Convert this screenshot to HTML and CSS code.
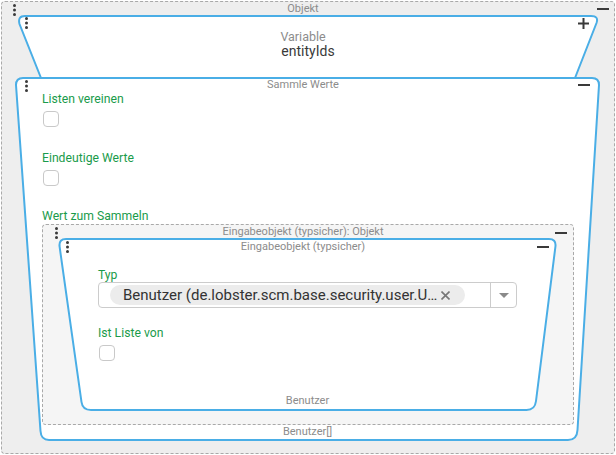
FILE: index.html
```html
<!DOCTYPE html>
<html lang="de">
<head>
<meta charset="utf-8">
<title>Objekt</title>
<link rel="stylesheet" href="styles.css">
</head>
<body>
<div class="obj">
  <div class="obj-head">
    <svg class="dots" width="3" height="12" viewBox="0 0 3 12"><circle cx="1.5" cy="1.5" r="1.5"/><circle cx="1.5" cy="6" r="1.5"/><circle cx="1.5" cy="10.5" r="1.5"/></svg>
    <div class="title obj-title">Objekt</div>
    <span class="minus obj-minus"></span>
  </div>
  <div class="node var">
    <svg class="shape" width="582" height="62" viewBox="0 0 582 62"><path d="M24 63 L2.5 9 Q0.5 1 8 1 L574 1 Q582 1 579.5 8 L558 63" /></svg>
    <div class="var-head">
      <svg class="dots" width="3" height="12" viewBox="0 0 3 12"><circle cx="1.5" cy="1.5" r="1.5"/><circle cx="1.5" cy="6" r="1.5"/><circle cx="1.5" cy="10.5" r="1.5"/></svg>
      <svg class="plus" width="11" height="11" viewBox="0 0 11 11"><path d="M5.5 0 V11 M0 5.5 H11"/></svg>
    </div>
    <div class="var-label">Variable</div>
    <div class="var-name">entityIds</div>
  </div>
  <div class="node sammle">
    <svg class="shape" width="585" height="364" viewBox="0 0 585 364"><path d="M8 1 L577 1 Q584 1 584 8 L562.5 353 Q562 363 553 363 L34 363 Q26 363 25.5 354 L1 8 Q1 1 8 1 Z"/></svg>
    <div class="head sammle-head">
      <svg class="dots" width="3" height="12" viewBox="0 0 3 12"><circle cx="1.5" cy="1.5" r="1.5"/><circle cx="1.5" cy="6" r="1.5"/><circle cx="1.5" cy="10.5" r="1.5"/></svg>
      <div class="title">Sammle Werte</div>
      <span class="minus"></span>
    </div>
    <div class="sammle-body">
      <div class="label">Listen vereinen</div>
      <div class="cb"></div>
      <div class="label gap">Eindeutige Werte</div>
      <div class="cb"></div>
      <div class="label gap3">Wert zum Sammeln</div>
      <div class="typed">
        <div class="head typed-head">
          <svg class="dots" width="3" height="12" viewBox="0 0 3 12"><circle cx="1.5" cy="1.5" r="1.5"/><circle cx="1.5" cy="6" r="1.5"/><circle cx="1.5" cy="10.5" r="1.5"/></svg>
          <div class="title typed-title">Eingabeobjekt (typsicher): Objekt</div>
          <span class="minus"></span>
        </div>
        <div class="node inner">
          <svg class="shape" width="499" height="173" viewBox="0 0 499 173"><path d="M8 1 L491 1 Q498 1 497.5 8 L478 163 Q477 172 468.5 172 L33 172 Q24.5 172 23.5 164 L1.5 8 Q1 1 8 1 Z"/></svg>
          <div class="head inner-head">
            <svg class="dots" width="3" height="12" viewBox="0 0 3 12"><circle cx="1.5" cy="1.5" r="1.5"/><circle cx="1.5" cy="6" r="1.5"/><circle cx="1.5" cy="10.5" r="1.5"/></svg>
            <div class="title">Eingabeobjekt (typsicher)</div>
            <span class="minus"></span>
          </div>
          <div class="inner-body">
            <div class="label typ">Typ</div>
            <div class="select">
              <div class="chip">
                <span class="chip-text">Benutzer (de.lobster.scm.base.security.user.U…</span>
                <svg class="chip-x" width="9" height="9" viewBox="0 0 9 9"><path d="M0.5 0.5 L8.5 8.5 M8.5 0.5 L0.5 8.5"/></svg>
              </div>
              <div class="select-fill"></div>
              <div class="select-arrow"><svg width="10" height="5" viewBox="0 0 10 5"><path d="M0 0 H10 L5 5 Z"/></svg></div>
            </div>
            <div class="label liste">Ist Liste von</div>
            <div class="cb cb-liste"></div>
          </div>
          <div class="foot inner-foot">Benutzer</div>
        </div>
      </div>
    </div>
    <div class="foot sammle-foot">Benutzer[]</div>
  </div>
</div>
</body>
</html>
```

FILE: styles.css
```css
html, body {
  margin: 0;
  padding: 0;
  background: #ffffff;
}
body {
  font-family: Roboto, "Liberation Sans", sans-serif;
  color: #333;
}
.obj {
  margin: 1px;
  width: 614px;
  height: 453px;
  box-sizing: border-box;
  border: 1px dashed #a9a9a9;
  border-radius: 4px;
  background: #eeeeee;
  padding: 0 15px;
}
.obj-head {
  display: flex;
  align-items: flex-start;
  height: 13px;
  margin: 0 -15px;
}
.dots {
  flex: 0 0 auto;
  fill: #3a3a3a;
}
.obj-head .dots {
  margin: 2px 0 0 11px;
}
.title {
  flex: 1;
  text-align: center;
  font-size: 11px;
  line-height: 13px;
  color: #8c8c8c;
  white-space: nowrap;
}
.obj-title {
  padding-right: 7px;
}
.minus {
  flex: 0 0 auto;
  width: 12px;
  height: 2px;
  background: #3a3a3a;
}
.obj-minus {
  margin: 6px 5px 0 0;
}
.node {
  position: relative;
}
.shape {
  position: absolute;
  left: 0;
  top: 0;
  overflow: visible;
  z-index: 0;
}
.shape path {
  fill: #ffffff;
  stroke: #4aaee6;
  stroke-width: 2;
}
.node > :not(.shape) {
  position: relative;
  z-index: 1;
}
.var {
  height: 62px;
}
.var-head {
  display: flex;
  justify-content: space-between;
  align-items: flex-start;
  height: 15px;
  padding: 0 10px 0 8px;
}
.var-head .dots {
  margin-top: 2px;
}
.plus {
  margin-top: 3px;
  stroke: #3a3a3a;
  stroke-width: 2;
}
.var-label {
  text-align: center;
  font-size: 12.5px;
  line-height: 13px;
  color: #8c8c8c;
  padding-right: 10px;
}
.var-name {
  text-align: center;
  font-size: 14px;
  line-height: 16px;
  color: #3a3a3a;
}
.sammle {
  height: 364px;
  margin: 0 -1px 0 -2px;
  display: flex;
  flex-direction: column;
}
.head {
  display: flex;
  align-items: flex-start;
}
.sammle-head {
  height: 14px;
  padding: 0 10px 0 10px;
}
.sammle-head .dots {
  margin-top: 2.5px;
}
.sammle-head .title {
  line-height: 16px;
}
.sammle-head .minus {
  margin-top: 7px;
}
.sammle-body {
  padding: 0 26px 0 27px;
}
.label {
  font-size: 12.2px;
  line-height: 16px;
  color: #1a9b4b;
}
.label.gap {
  margin-top: 23px;
}
.label.gap3 {
  margin-top: 22px;
}
.cb {
  width: 16px;
  height: 16px;
  box-sizing: border-box;
  border: 1px solid #c9c9c9;
  border-radius: 4px;
  background: #fff;
  margin: 4px 0 0 1px;
}
.typed {
  height: 201px;
  box-sizing: border-box;
  border: 1px dashed #a9a9a9;
  border-radius: 4px;
  background: #f5f5f5;
  padding: 0 16px 0 15px;
}
.typed-head {
  height: 13px;
  margin: 0 -16px 0 -15px;
  padding: 0 6px 0 12px;
}
.typed-head .dots {
  margin-top: 2px;
}
.typed-head .minus {
  margin-top: 7px;
}
.typed-title {
  padding-right: 7px;
}
.inner {
  height: 173px;
  display: flex;
  flex-direction: column;
}
.inner-head {
  height: 14px;
  padding: 0 8px 0 8px;
}
.inner-head .dots {
  margin-top: 3px;
}
.inner-head .title {
  line-height: 18px;
}
.inner-head .minus {
  margin-top: 8px;
}
.inner-body {
  flex: 1;
  padding: 0 40px;
}
.typ {
  margin-top: 15px;
  margin-bottom: -1px;
}
.select {
  display: flex;
  align-items: center;
  height: 26px;
  box-sizing: border-box;
  border: 1px solid #cccccc;
  border-radius: 4px;
  background: #fff;
}
.chip {
  display: flex;
  align-items: center;
  width: 355px;
  height: 20px;
  box-sizing: border-box;
  margin-left: 11px;
  padding: 0 15px 0 13px;
  border-radius: 10px;
  background: #ececec;
}
.chip-text {
  flex: 1;
  font-size: 15px;
  line-height: 20px;
  color: #333;
  white-space: nowrap;
  overflow: hidden;
}
.chip-x {
  flex: 0 0 auto;
  stroke: #777;
  stroke-width: 1.6;
}
.select-fill {
  flex: 1;
  align-self: stretch;
  border-right: 1px solid #cccccc;
}
.select-arrow {
  width: 25px;
  display: flex;
  justify-content: center;
  align-items: center;
  fill: #8a8a8a;
}
.liste {
  margin-top: 17px;
}
.cb-liste {
  margin-top: 4px;
}
.foot {
  text-align: center;
  font-size: 11px;
  line-height: 14px;
  color: #8c8c8c;
}
.inner-foot {
  padding-bottom: 3px;
}
.sammle-foot {
  margin-top: auto;
  padding-bottom: 2px;
}
```
